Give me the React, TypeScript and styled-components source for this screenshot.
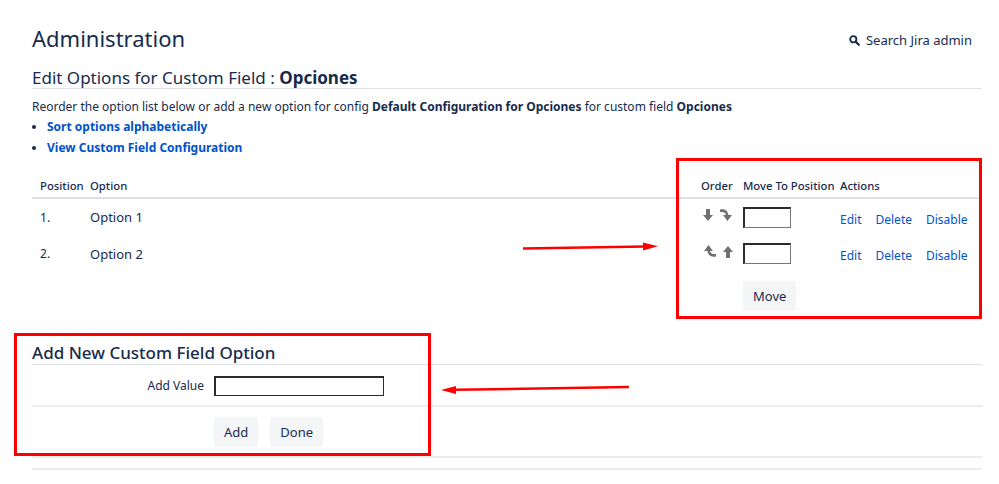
import React from 'react';
import styled, {createGlobalStyle} from 'styled-components';

const GlobalStyle = createGlobalStyle`
    body {
        margin: 0;
        background: #fff;
        font-family: "Noto Sans", "Open Sans", sans-serif;
        color: #172b4d;
    }
`

const Page = styled.div`
    position: relative;
    width: 950px;
    padding: 22px 17px 0 32px;
`

const TopBar = styled.div`
    display: flex;
    justify-content: space-between;
    align-items: center;
`

const PageTitle = styled.h1`
    margin: 0;
    font-size: 22px;
    font-weight: 400;
    line-height: 32px;
`

const SearchLink = styled.span`
    display: flex;
    align-items: center;
    gap: 6px;
    font-size: 13px;
    margin-right: 10px;
    margin-top: 4px;
`

const SectionTitle = styled.h2`
    margin: 14px 0 0;
    font-size: 17px;
    font-weight: 400;
    line-height: 20px;
    padding-bottom: 0;
    border-bottom: 1px solid #dfe1e6;

    b {
        font-weight: 700;
    }
`

const Description = styled.p`
    margin: 8px 0 0;
    font-size: 12px;
    line-height: 20px;
`

const LinkList = styled.ul`
    margin: 0;
    padding: 0 0 0 15px;
    list-style: disc;
    font-size: 12px;

    li {
        line-height: 20px;
        margin-bottom: 1px;
    }
`

const BoldLink = styled.a`
    color: #0052cc;
    font-weight: 700;
    text-decoration: none;
`

const OptionsTable = styled.table`
    width: 100%;
    margin-top: 15px;
    border-collapse: collapse;
    table-layout: fixed;
    font-size: 12px;
`

const HeadCell = styled.th`
    text-align: left;
    font-weight: 500;
    font-size: 11.3px;
    padding: 5px 8px 4px;
    border-bottom: 2px solid #dfe1e6;
    white-space: nowrap;
    overflow: visible;
`

const Cell = styled.td<{$top?: number}>`
    height: 37px;
    box-sizing: border-box;
    padding: ${p => p.$top ?? 0}px 8px 0;
    vertical-align: ${p => (p.$top !== undefined ? 'top' : 'middle')};
    white-space: nowrap;
`

const OptionText = styled.span`
    font-size: 13px;
`

const ArrowGroup = styled.span`
    display: inline-flex;
    gap: 7px;
    align-items: center;
    padding-left: 2px;
    margin-top: -3px;
`

const PositionInput = styled.input`
    box-sizing: border-box;
    width: 48px;
    height: 21px;
    border-style: solid;
    border-width: 2px 1px 1px 2px;
    border-color: #2b2b2b #777 #777 #2b2b2b;
    padding: 0 4px;
    display: block;
`

const ActionLinks = styled.span`
    display: inline-flex;
    gap: 14px;
    font-size: 12px;
`

const ActionLink = styled.a`
    color: #0052cc;
    text-decoration: none;
`

const Button = styled.button`
    font-family: inherit;
    font-size: 13px;
    color: #172b4d;
    background: #f4f5f7;
    border: none;
    border-radius: 3px;
    padding: 0 10px;
    height: 30px;
    cursor: pointer;
`

const AddSection = styled.div`
    margin-top: 31px;
`

const AddTitle = styled.h3`
    margin: 0;
    font-size: 17px;
    font-weight: 500;
    line-height: 22px;
    border-bottom: 1px solid #dfe1e6;
`

const FieldRow = styled.div`
    display: grid;
    grid-template-columns: 172px auto;
    column-gap: 10px;
    align-items: center;
    height: 40px;
    border-bottom: 2px solid #ebecf0;
`

const FieldLabel = styled.label`
    text-align: right;
    font-size: 12px;
`

const TextInput = styled.input`
    box-sizing: border-box;
    width: 170px;
    height: 20px;
    border-style: solid;
    border-width: 2px 1px 1px 2px;
    border-color: #2b2b2b #777 #777 #2b2b2b;
    outline: 1px solid #2b2b2b;
    outline-offset: -1px;
    padding: 0 3px;
    margin-top: 1px;
`

const ButtonRow = styled.div`
    display: flex;
    gap: 12px;
    padding: 10px 0 9px 182px;
    border-bottom: 2px solid #ebecf0;
`

const BottomRule = styled.div`
    height: 10px;
    border-bottom: 2px solid #ebecf0;
`

/* annotation layer */
const RedBox = styled.div<{$x: number; $y: number; $w: number; $h: number}>`
    position: absolute;
    left: ${p => p.$x}px;
    top: ${p => p.$y}px;
    width: ${p => p.$w}px;
    height: ${p => p.$h}px;
    box-sizing: border-box;
    border: 3px solid #ff0000;
    pointer-events: none;
`

const ArrowSvg = styled.svg`
    position: absolute;
    left: 0;
    top: 0;
    pointer-events: none;
`

const SearchIcon = () => (
    <svg width="11" height="11" viewBox="0 0 11 11">
        <circle cx="4.3" cy="4.3" r="3.1" fill="none" stroke="#172b4d" strokeWidth="1.8"/>
        <path d="M6.6 6.6 L9.8 9.8" stroke="#172b4d" strokeWidth="2.2" strokeLinecap="round"/>
    </svg>
)

const DownArrow = ({up}: {up?: boolean}) => (
    <svg width="10" height="13" viewBox="0 0 10 13" style={up ? {transform: 'rotate(180deg)'} : undefined}>
        <path d="M3 0 H7 V6 H10 L5 12 L0 6 H3 Z" fill="#707070"/>
    </svg>
)

const CurvedArrow = ({up}: {up?: boolean}) => (
    <svg width="13" height="14" viewBox="0 0 13 14" style={up ? {transform: 'scale(-1, -1)'} : undefined}>
        <path d="M0 1.5 C5 0.5 8 3 8.5 7 H12 L7.5 13 L3 7 H6 C5.6 4.6 3.5 3.6 0 4 Z" fill="#707070"/>
    </svg>
)

const options = [
    {pos: 1, name: 'Option 1', first: true},
    {pos: 2, name: 'Option 2', first: false},
]

export default function App() {
    return (
        <>
            <GlobalStyle/>
            <Page>
                <TopBar>
                    <PageTitle>Administration</PageTitle>
                    <SearchLink><SearchIcon/>Search Jira admin</SearchLink>
                </TopBar>

                <SectionTitle>Edit Options for Custom Field : <b>Opciones</b></SectionTitle>
                <Description>
                    Reorder the option list below or add a new option for config <b>Default Configuration for Opciones</b> for custom field <b>Opciones</b>
                </Description>
                <LinkList>
                    <li><BoldLink href="#">Sort options alphabetically</BoldLink></li>
                    <li><BoldLink href="#">View Custom Field Configuration</BoldLink></li>
                </LinkList>

                <OptionsTable>
                    <colgroup>
                        <col style={{width: 50}}/>
                        <col/>
                        <col style={{width: 42}}/>
                        <col style={{width: 97}}/>
                        <col style={{width: 150}}/>
                    </colgroup>
                    <thead>
                    <tr>
                        <HeadCell>Position</HeadCell>
                        <HeadCell>Option</HeadCell>
                        <HeadCell>Order</HeadCell>
                        <HeadCell>Move To Position</HeadCell>
                        <HeadCell>Actions</HeadCell>
                    </tr>
                    </thead>
                    <tbody>
                    {options.map(o => (
                        <tr key={o.pos}>
                            <Cell>{o.pos}.</Cell>
                            <Cell><OptionText>{o.name}</OptionText></Cell>
                            <Cell>
                                <ArrowGroup>
                                    {o.first ? <><DownArrow/><CurvedArrow/></> : <><CurvedArrow up/><DownArrow up/></>}
                                </ArrowGroup>
                            </Cell>
                            <Cell><PositionInput/></Cell>
                            <Cell $top={12}>
                                <ActionLinks>
                                    <ActionLink href="#">Edit</ActionLink>
                                    <ActionLink href="#">Delete</ActionLink>
                                    <ActionLink href="#">Disable</ActionLink>
                                </ActionLinks>
                            </Cell>
                        </tr>
                    ))}
                    <tr>
                        <Cell/>
                        <Cell/>
                        <Cell/>
                        <Cell $top={9}><Button>Move</Button></Cell>
                        <Cell/>
                    </tr>
                    </tbody>
                </OptionsTable>

                <AddSection>
                    <AddTitle>Add New Custom Field Option</AddTitle>
                    <FieldRow>
                        <FieldLabel>Add Value</FieldLabel>
                        <TextInput/>
                    </FieldRow>
                    <ButtonRow>
                        <Button>Add</Button>
                        <Button>Done</Button>
                    </ButtonRow>
                    <BottomRule/>
                </AddSection>

                <RedBox $x={676} $y={158} $w={306} $h={161}/>
                <RedBox $x={14} $y={333} $w={417} $h={123}/>
                <ArrowSvg width="999" height="484">
                    <path d="M523 248.5 L645 246.5" stroke="#ff0000" strokeWidth="2.5"/>
                    <path d="M658 246.3 L643 242.5 L643 250.5 Z" fill="#ff0000"/>
                    <path d="M629 387 L455 389.8" stroke="#ff0000" strokeWidth="2.5"/>
                    <path d="M441 390 L456 386 L456 394 Z" fill="#ff0000"/>
                </ArrowSvg>
            </Page>
        </>
    );
}
